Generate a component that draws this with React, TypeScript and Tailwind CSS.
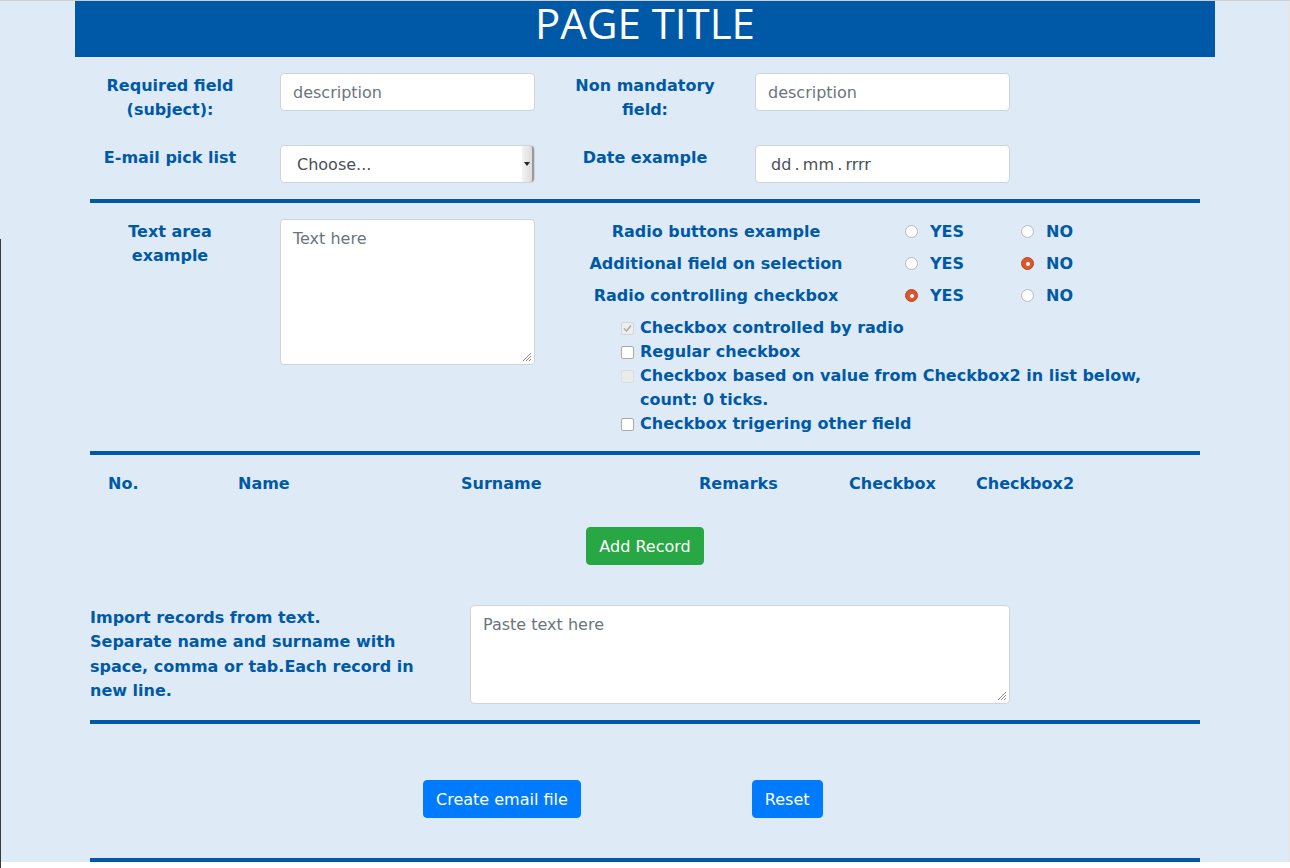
import React from "react"

function TextBox({ text, placeholder = true }: { text: string; placeholder?: boolean }) {
  return (
    <div className="w-[255px] h-[38px] bg-white border border-[#ced4da] rounded-[4px] flex items-center px-3 pt-px">
      <span className={placeholder ? "text-[#6c757d]" : "text-[#495057]"}>{text}</span>
    </div>
  )
}

function ResizeGrip() {
  return (
    <svg width="10" height="10" viewBox="0 0 10 10" className="absolute right-[2px] bottom-[2px]">
      <path d="M9 1 L1 9 M9 4 L4 9 M9 7 L7 9" stroke="#8a8a8a" strokeWidth="1" />
    </svg>
  )
}

function Radio({ checked }: { checked?: boolean }) {
  if (checked) {
    return (
      <span className="w-[13px] h-[13px] rounded-full bg-[#d9572b] border border-[#b8461f] flex items-center justify-center shrink-0">
        <span className="w-[4px] h-[4px] rounded-full bg-white" />
      </span>
    )
  }
  return <span className="w-[13px] h-[13px] rounded-full bg-white border border-[#b9b9b9] shrink-0" />
}

function RadioRow({ label, checked }: { label: string; checked?: "yes" | "no" }) {
  return (
    <div className="flex items-center h-6 mb-2 pt-px">
      <div className="w-[302px] text-center">{label}</div>
      <div className="w-[116px] ml-[38px] flex items-center gap-[12px]">
        <Radio checked={checked === "yes"} />
        <span>YES</span>
      </div>
      <div className="flex items-center gap-[12px]">
        <Radio checked={checked === "no"} />
        <span>NO</span>
      </div>
    </div>
  )
}

function Check({ kind }: { kind: "on-disabled" | "off" | "off-disabled" }) {
  if (kind === "on-disabled") {
    return (
      <span className="w-[13px] h-[13px] mt-[6px] rounded-[2px] bg-[#eeeeee] border border-[#d4d4d4] flex items-center justify-center shrink-0">
        <svg width="9" height="9" viewBox="0 0 9 9">
          <path d="M1 4.5 L3.5 7 L8 1.5" stroke="#a8a8a8" strokeWidth="1.5" fill="none" />
        </svg>
      </span>
    )
  }
  if (kind === "off-disabled") {
    return <span className="w-[13px] h-[13px] mt-[6px] rounded-[2px] bg-[#ebebeb] border border-[#dddddd] shrink-0" />
  }
  return <span className="w-[13px] h-[13px] mt-[6px] rounded-[2px] bg-white border border-[#a9a9a9] shrink-0" />
}

function CheckRow({ kind, children }: { kind: "on-disabled" | "off" | "off-disabled"; children: React.ReactNode }) {
  return (
    <div className="flex items-start gap-[6px] ml-[56px]">
      <Check kind={kind} />
      <span>{children}</span>
    </div>
  )
}

function Rule() {
  return <div className="h-[4px] bg-[#0059a6]" />
}

export default function App() {
  return (
    <div className="relative min-h-[868px] border-t border-[#cfcfcf] font-['DejaVu_Sans',sans-serif] text-base">
      {/* thin dark edge on the left of the capture */}
      <div className="absolute left-0 top-[238px] bottom-0 w-px bg-[#3a3a3a]" />

      <div className="flex">
        <div className="w-[1288px] bg-[#deebf7]">
          <div className="w-[1140px] ml-[75px]">
            {/* Header */}
            <div className="h-[56px] bg-[#0059a6] text-center text-white font-['Open_Sans',sans-serif] font-normal text-[42px] leading-[44px]">
              PAGE TITLE
            </div>

            <div className="px-[15px] font-bold text-[#0059a6] leading-6">
              {/* Row 1 */}
              <div className="flex items-start mt-4">
                <div className="w-[160px] text-center pt-px">Required field (subject):</div>
                <div className="ml-[30px] font-normal">
                  <TextBox text="description" />
                </div>
                <div className="w-[160px] ml-[30px] text-center pt-px">Non mandatory field:</div>
                <div className="ml-[30px] font-normal">
                  <TextBox text="description" />
                </div>
              </div>

              {/* Row 2 */}
              <div className="flex items-start mt-[23px]">
                <div className="w-[160px] text-center pt-px">E-mail pick list</div>
                <div className="ml-[30px] font-normal">
                  <div className="relative w-[255px] h-[38px] bg-white border border-[#ced4da] rounded-[4px] flex items-center pl-4 pt-px">
                    <span className="text-[#495057]">Choose...</span>
                    <div className="absolute right-0 top-0 bottom-0 w-[12px] bg-gradient-to-r from-[#f4f4f4] to-[#dcdcdc] border-r-2 border-[#9a9a9a] rounded-r-[3px] flex items-center justify-center">
                      <svg width="6" height="4" viewBox="0 0 6 4">
                        <path d="M0 0 L6 0 L3 4 Z" fill="#222" />
                      </svg>
                    </div>
                  </div>
                </div>
                <div className="w-[160px] ml-[30px] text-center pt-px">Date example</div>
                <div className="ml-[30px] font-normal">
                  <div className="w-[255px] h-[38px] bg-white border border-[#ced4da] rounded-[4px] flex items-center pl-[15px] pt-px">
                    <span className="text-[#495057] whitespace-pre">dd{"\u2009.\u2009"}mm{"\u2009.\u2009"}rrrr</span>
                  </div>
                </div>
              </div>

              <div className="mt-4">
                <Rule />
              </div>

              {/* Row 3 */}
              <div className="flex items-start mt-4">
                <div className="w-[160px] text-center pt-px">Text area example</div>
                <div className="relative ml-[30px] w-[255px] h-[146px] bg-white border border-[#ced4da] rounded-[4px] px-3 py-[7px] font-normal text-[#6c757d]">
                  Text here
                  <ResizeGrip />
                </div>
                <div className="ml-[30px] flex-1">
                  <RadioRow label="Radio buttons example" />
                  <RadioRow label="Additional field on selection" checked="no" />
                  <RadioRow label="Radio controlling checkbox" checked="yes" />
                  <div className="translate-y-px">
                    <CheckRow kind="on-disabled">Checkbox controlled by radio</CheckRow>
                    <CheckRow kind="off">Regular checkbox</CheckRow>
                    <CheckRow kind="off-disabled">
                      Checkbox based on value from Checkbox2 in list below, count: 0 ticks.
                    </CheckRow>
                    <CheckRow kind="off">Checkbox trigering other field</CheckRow>
                  </div>
                </div>
              </div>

              <div className="mt-4">
                <Rule />
              </div>

              {/* Records table header */}
              <div className="flex mt-4 pt-px">
                <div className="w-[148px] pl-[18px]">No.</div>
                <div className="w-[223px]">Name</div>
                <div className="w-[238px]">Surname</div>
                <div className="w-[150px]">Remarks</div>
                <div className="w-[127px]">Checkbox</div>
                <div>Checkbox2</div>
              </div>

              <div className="flex justify-center mt-[31px]">
                <button className="h-[38px] px-3 pt-px bg-[#28a745] border border-[#28a745] text-white font-normal rounded-[4px]">
                  Add Record
                </button>
              </div>

              {/* Import */}
              <div className="flex items-start mt-10">
                <div className="w-[350px] leading-[24.4px] pt-px">
                  Import records from text.
                  <br />
                  Separate name and surname with space, comma or tab.Each record in new line.
                </div>
                <div className="relative ml-[30px] w-[540px] h-[99px] bg-white border border-[#ced4da] rounded-[4px] px-3 py-[7px] font-normal text-[#6c757d]">
                  Paste text here
                  <ResizeGrip />
                </div>
              </div>

              <div className="mt-4">
                <Rule />
              </div>

              <div className="flex mt-14 font-normal">
                <button className="ml-[333px] h-[38px] px-3 pt-px bg-[#007bff] border border-[#007bff] text-white rounded-[4px]">
                  Create email file
                </button>
                <button className="ml-[171px] h-[38px] px-3 pt-px bg-[#007bff] border border-[#007bff] text-white rounded-[4px]">
                  Reset
                </button>
              </div>

              <div className="mt-10">
                <Rule />
              </div>
            </div>
          </div>
        </div>
        <div className="w-[2px] bg-[#e6e6e6]" />
      </div>
    </div>
  )
}
